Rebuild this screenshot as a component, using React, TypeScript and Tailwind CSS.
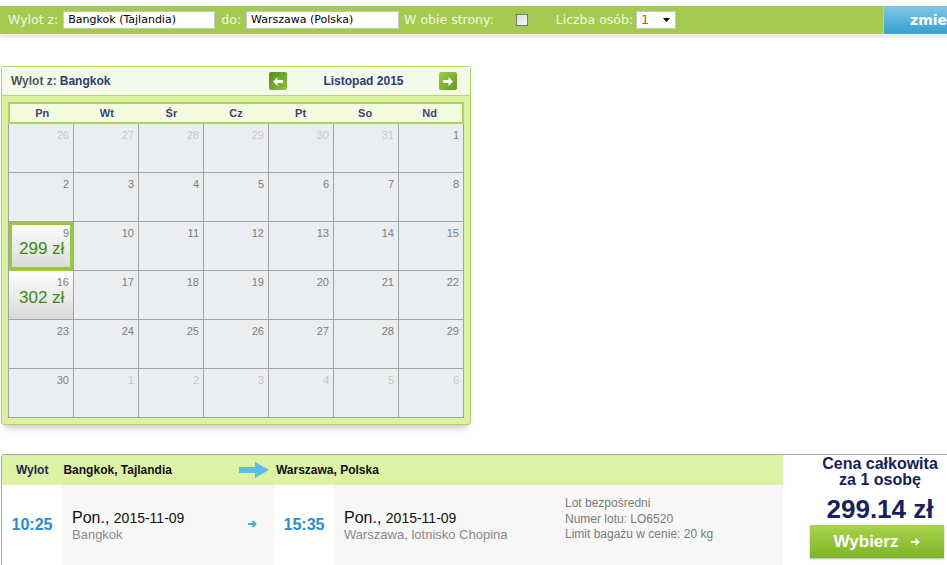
import React from "react";

type Cell = { d: number; muted?: boolean; price?: string; selected?: boolean };

const weekDays = ["Pn", "Wt", "Śr", "Cz", "Pt", "So", "Nd"];

const weeks: Cell[][] = [
  [
    { d: 26, muted: true },
    { d: 27, muted: true },
    { d: 28, muted: true },
    { d: 29, muted: true },
    { d: 30, muted: true },
    { d: 31, muted: true },
    { d: 1 },
  ],
  [{ d: 2 }, { d: 3 }, { d: 4 }, { d: 5 }, { d: 6 }, { d: 7 }, { d: 8 }],
  [
    { d: 9, price: "299 zł", selected: true },
    { d: 10 },
    { d: 11 },
    { d: 12 },
    { d: 13 },
    { d: 14 },
    { d: 15 },
  ],
  [
    { d: 16, price: "302 zł" },
    { d: 17 },
    { d: 18 },
    { d: 19 },
    { d: 20 },
    { d: 21 },
    { d: 22 },
  ],
  [{ d: 23 }, { d: 24 }, { d: 25 }, { d: 26 }, { d: 27 }, { d: 28 }, { d: 29 }],
  [
    { d: 30 },
    { d: 1, muted: true },
    { d: 2, muted: true },
    { d: 3, muted: true },
    { d: 4, muted: true },
    { d: 5, muted: true },
    { d: 6, muted: true },
  ],
];

function NavArrow({ dir }: { dir: "left" | "right" }) {
  const bg =
    dir === "left"
      ? "bg-gradient-to-br from-[#4f8f1c] to-[#8cc63e]"
      : "bg-gradient-to-br from-[#a3cf46] to-[#5e9a1e]";
  return (
    <div className={`w-[18px] h-[18px] rounded-[2px] flex items-center justify-center ${bg}`}>
      <svg width="10" height="9" viewBox="0 0 10 9">
        {dir === "left" ? (
          <path d="M0 4.5 L4.5 0 V3 H10 V6 H4.5 V9 Z" fill="#fff" />
        ) : (
          <path d="M10 4.5 L5.5 0 V3 H0 V6 H5.5 V9 Z" fill="#fff" />
        )}
      </svg>
    </div>
  );
}

function SmallArrow({ color }: { color: string }) {
  return (
    <svg width="9" height="8" viewBox="0 0 9 8">
      <path d="M0 4 H7.5 M4.5 1 L7.5 4 L4.5 7" stroke={color} strokeWidth="1.8" fill="none" />
    </svg>
  );
}

function DayCell({ c }: { c: Cell }) {
  if (c.price) {
    const frame = c.selected
      ? "border-r border-b border-[#98c83c] shadow-[inset_0_0_0_3px_#98c83c]"
      : "border-r border-b border-[#a3a3a3]";
    return (
      <div className={`h-[49px] relative bg-gradient-to-b from-[#ffffff] to-[#d9d9d9] ${frame}`}>
        <div className="absolute top-[3px] right-[4px] text-[11px] text-[#7d7d7d]">{c.d}</div>
        <div className="absolute left-[10px] top-[14px] text-[17px] text-[#3d8a14]">{c.price}</div>
      </div>
    );
  }
  return (
    <div className="h-[49px] border-r border-b border-[#a3a3a3] relative bg-[#ebeef1]">
      <div className={`absolute top-[3px] right-[4px] text-[11px] ${c.muted ? "text-[#c8c8c8]" : "text-[#7d7d7d]"}`}>
        {c.d}
      </div>
    </div>
  );
}

export default function App() {
  return (
    <div className="w-[947px] h-[565px] overflow-hidden bg-white relative font-['Liberation_Sans',Arial,sans-serif]">
      {/* search bar */}
      <div className="mt-[6px] w-[1000px] h-[29px] flex bg-[#a4cb4f] border-b border-white shadow-[0_2px_3px_rgba(0,0,0,0.12)] font-['DejaVu_Sans',Verdana,sans-serif]">
        <div className="flex items-center flex-1 text-[12.5px] text-[#f2f7e4]">
          <span className="ml-[8px]">Wylot z:</span>
          <div className="ml-[5px] w-[152px] h-[18px] bg-white border border-[#c6c6c6] text-[11px] text-black pl-[4px] leading-[16px]">
            Bangkok (Tajlandia)
          </div>
          <span className="ml-[6px]">do:</span>
          <div className="ml-[5px] w-[153px] h-[18px] bg-white border border-[#c6c6c6] text-[11px] text-black pl-[4px] leading-[16px]">
            Warszawa (Polska)
          </div>
          <span className="ml-[5px]">W obie strony:</span>
          <div className="ml-[22px] w-[12px] h-[12px] border border-[#7a7a7a] bg-gradient-to-br from-[#dcdcdc] to-[#f6f6f6]" />
          <span className="ml-[28px]">Liczba osób:</span>
          <div className="ml-[3px] w-[40px] h-[18px] bg-white border border-[#c6c6c6] flex items-center justify-between pl-[4px] pr-[5px]">
            <span className="text-[12px] text-[#b8560a] leading-none">1</span>
            <svg width="7" height="4" viewBox="0 0 7 4">
              <path d="M0 0 H7 L3.5 4 Z" fill="#000" />
            </svg>
          </div>
        </div>
        <div className="w-[117px] h-full border-l border-[#8fd4f0] bg-gradient-to-b from-[#7dc8e6] to-[#34a0d0] text-white font-bold text-[14px] flex items-center pl-[26px]">
          zmień
        </div>
      </div>

      {/* calendar */}
      <div className="ml-[1px] mt-[31px] w-[470px] border border-[#b2d868] rounded-[3px] bg-[#dcf2a2] shadow-[0_7px_6px_-4px_rgba(0,0,0,0.22)]">
        <div className="h-[29px] bg-[#f3faea] border-b border-[#b2d868] flex items-center text-[12px] font-bold">
          <span className="ml-[9px] text-[#55555f]">Wylot z:</span>
          <span className="ml-[3px] text-[#2a3a78]">Bangkok</span>
          <div className="ml-[159px]">
            <NavArrow dir="left" />
          </div>
          <span className="w-[152px] text-center text-[12px] text-[#2a3a82]">Listopad 2015</span>
          <NavArrow dir="right" />
        </div>
        <div className="pt-[6px] pl-[6px] pb-[6px]">
          <div className="w-[456px] h-[22px] bg-[#f5fbe1] border-2 border-[#acd35e] grid grid-cols-7 items-center text-[11px] font-bold text-[#35457f]">
            {weekDays.map((w) => (
              <div key={w} className="text-center">
                {w}
              </div>
            ))}
          </div>
          <div className="w-[456px] border-l border-[#a3a3a3] grid grid-cols-7">
            {weeks.flat().map((c, i) => (
              <DayCell key={i} c={c} />
            ))}
          </div>
        </div>
      </div>

      {/* flight */}
      <div className="mt-[29px] ml-[1px] w-[1000px] border-t border-l border-[#a9a9a9] rounded-tl-[3px] flex">
        <div className="w-[781px]">
          <div className="h-[30px] bg-[#ddf2a4] flex items-center text-[12px] font-bold">
            <span className="ml-[14px] text-[#1b2754]">Wylot</span>
            <span className="ml-[15px] text-[#111]">Bangkok, Tajlandia</span>
            <svg className="ml-[67px]" width="30" height="16" viewBox="0 0 30 16">
              <path d="M0 5 H16 V0 L30 8 L16 16 V11 H0 Z" fill="#5bbcf0" />
            </svg>
            <span className="ml-[7px] text-[#111]">Warszawa, Polska</span>
          </div>
          <div className="h-[80px] flex">
            <div className="w-[60px] flex items-center justify-center text-[16px] font-bold text-[#1e8fd8]">
              10:25
            </div>
            <div className="w-[212px] bg-[#f7f7f7] flex items-center relative">
              <div className="ml-[10px] mt-[2px]">
                <div className="text-[#111] leading-[18px]">
                  <span className="text-[16px]">Pon.,</span> <span className="text-[14px]">2015-11-09</span>
                </div>
                <div className="text-[13px] text-[#888] leading-[16px]">Bangkok</div>
              </div>
              <div className="absolute left-[186px] top-[35px]">
                <SmallArrow color="#4aa7dd" />
              </div>
            </div>
            <div className="w-[60px] flex items-center justify-center text-[16px] font-bold text-[#1e8fd8]">
              15:35
            </div>
            <div className="flex-1 bg-[#f7f7f7] flex items-center">
              <div className="ml-[10px] mt-[2px] w-[221px]">
                <div className="text-[#111] leading-[18px]">
                  <span className="text-[16px]">Pon.,</span> <span className="text-[14px]">2015-11-09</span>
                </div>
                <div className="text-[13px] text-[#888] leading-[16px]">Warszawa, lotnisko Chopina</div>
              </div>
              <div className="text-[12px] text-[#7a7a7a] leading-[15.5px] -mt-[11px]">
                <div>Lot bezpośredni</div>
                <div>Numer lotu: LO6520</div>
                <div>Limit bagażu w cenie: 20 kg</div>
              </div>
            </div>
          </div>
        </div>
        <div className="w-[194px] flex flex-col items-center">
          <div className="mt-[1px] text-[16px] font-bold text-[#15225e] text-center leading-[16px]">
            Cena całkowita
            <br />
            za 1 osobę
          </div>
          <div className="mt-[6px] text-[26px] font-bold text-[#15225e] leading-[30px]">299.14 zł</div>
          <div className="mt-[1px] ml-[-6px] w-[134px] h-[33px] bg-gradient-to-b from-[#a9d34d] to-[#7db526] shadow-[0_1px_2px_rgba(0,0,0,0.3)] flex items-center justify-center gap-[13px] text-white font-bold text-[17px]">
            <span>Wybierz</span>
            <SmallArrow color="#ffffff" />
          </div>
        </div>
      </div>
    </div>
  );
}
